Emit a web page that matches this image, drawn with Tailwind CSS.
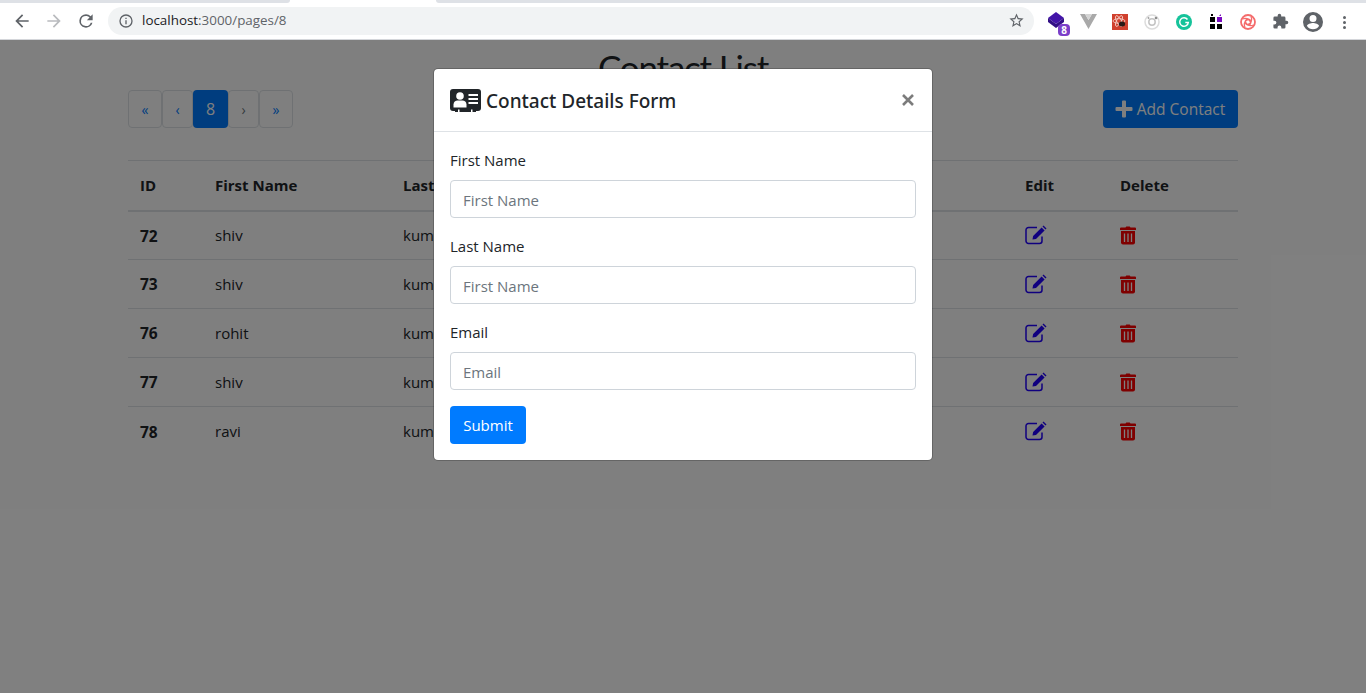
<!DOCTYPE html>
<html lang="en">
<head>
    <meta charset="UTF-8">
    <title>Contact List</title>
    <script src="https://cdn.jsdelivr.net/npm/@tailwindcss/browser@4"></script>
</head>
<body class="bg-white text-[#212529] font-['Open_Sans',sans-serif] overflow-hidden h-[693px]">

    <!-- Browser toolbar -->
    <div class="h-10 bg-white border-b border-[#d4d6da] relative flex items-center pt-[2px]">
        <div class="absolute top-0 left-0 w-[290px] h-[3px] bg-[#dee1e6] rounded-br-md"></div>
        <div class="absolute top-0 left-[436px] right-0 h-[3px] bg-[#dee1e6] rounded-bl-md"></div>

        <div class="w-[108px] flex items-center shrink-0">
            <svg class="ml-[12px]" width="20" height="20" viewBox="0 0 24 24" fill="#5f6368"><path d="M20 11H7.830l5.590-5.590L12 4l-8 8 8 8 1.410-1.410L7.830 13H20z"/></svg>
            <svg class="ml-[12px]" width="20" height="20" viewBox="0 0 24 24" fill="#b9bbbe"><path d="M4 13h12.170l-5.590 5.590L12 20l8-8-8-8-1.410 1.410L16.170 11H4z"/></svg>
            <svg class="ml-[12px]" width="20" height="20" viewBox="0 0 24 24" fill="#5f6368"><path d="M17.650 6.350A7.960 7.960 0 0 0 12 4a8 8 0 1 0 7.730 10h-2.080A6 6 0 1 1 12 6c1.660 0 3.140.69 4.220 1.780L13 11h7V4z"/></svg>
        </div>
        <div class="w-[926px] h-7 bg-[#f1f3f4] rounded-full flex items-center shrink-0">
            <svg class="ml-[10px]" width="16" height="16" viewBox="0 0 24 24" fill="#5f6368"><path d="M11 7h2v2h-2zm0 4h2v6h-2zm1-9a10 10 0 1 0 0 20 10 10 0 0 0 0-20zm0 18a8 8 0 1 1 0-16 8 8 0 0 1 0 16z"/></svg>
            <span class="ml-[8px] text-[13.400px] text-[#5f6368]"><span class="text-[#202124]">localhost</span>:3000/pages/8</span>
            <svg class="ml-auto mr-[9px]" width="17" height="17" viewBox="0 0 24 24" fill="#5f6368"><path d="M22 9.240l-7.190-.62L12 2 9.190 8.630 2 9.240l5.460 4.730L5.820 21 12 17.270 18.180 21l-1.630-7.030zM12 15.400l-3.760 2.270 1-4.280-3.320-2.880 4.380-.38L12 6.100l1.710 4.040 4.380.38-3.320 2.880 1 4.280z"/></svg>
        </div>

        <!-- Extensions -->
        <div class="relative flex-1 h-[38px] -mt-[2px]">
            <svg class="absolute left-[14px] top-[11px]" width="17" height="16" viewBox="0 0 17 16"><path d="M8 0l8 6-8 6-8-6z" fill="#4314a8"/><path d="M0 6l8 6 8-6v4l-8 6-8-6z" fill="#320f85"/></svg>
            <div class="absolute left-[24px] top-[23px] w-3 h-3 rounded-sm bg-[#7b3fc9] text-white text-[10px] leading-3 font-bold text-center">8</div>
            <svg class="absolute left-[46px] top-[13px]" width="17" height="15" viewBox="0 0 17 15"><path d="M0 0h5l3.500 6L12 0h5L8.500 15z" fill="#a9a9a9"/><path d="M5 0h7L8.500 6z" fill="#d4d4d4"/></svg>
            <svg class="absolute left-[78px] top-[13px]" width="16" height="16" viewBox="0 0 16 16"><rect width="16" height="16" fill="#d0402e"/><g fill="none" stroke="#f7d6cf" stroke-width=".8"><ellipse cx="7" cy="7" rx="6" ry="2.300"/><ellipse cx="7" cy="7" rx="6" ry="2.300" transform="rotate(60 7 7)"/><ellipse cx="7" cy="7" rx="6" ry="2.300" transform="rotate(120 7 7)"/></g><ellipse cx="10" cy="10" rx="3.200" ry="2.500" fill="#2b1a17"/></svg>
            <svg class="absolute left-[110px] top-[13px]" width="16" height="16" viewBox="0 0 16 16" fill="none"><circle cx="8" cy="8" r="7" stroke="#dcdcdc" stroke-width="1.500"/><circle cx="8" cy="8" r="3.200" stroke="#c4c4c4" stroke-width="1.500"/><circle cx="12" cy="4" r="1.300" fill="#8e8e8e"/><circle cx="4.500" cy="4" r=".9" fill="#9e9e9e"/></svg>
            <svg class="absolute left-[142px] top-[13px]" width="16" height="16" viewBox="0 0 16 16"><circle cx="8" cy="8" r="8" fill="#15c39a"/><path d="M11.500 5.500A4.300 4.300 0 1 0 12.300 8.500H9.300" fill="none" stroke="#fff" stroke-width="1.500"/></svg>
            <svg class="absolute left-[175px] top-[13px]" width="14" height="16" viewBox="0 0 14 16"><rect x="1" y="3" width="5" height="5" fill="#000"/><rect x="2" y="0" width="2" height="2" fill="#000"/><rect x="8" y="3" width="5" height="5" fill="#7a0bc0"/><path d="M10 2l2-2v2z" fill="#7a0bc0"/><rect x="1" y="10" width="5" height="5" fill="#000"/><rect x="8" y="10" width="5" height="5" fill="#000"/></svg>
            <svg class="absolute left-[206px] top-[13px]" width="16" height="16" viewBox="0 0 16 16" fill="none"><circle cx="8" cy="8" r="7" stroke="#f46b6b" stroke-width="1.800"/><circle cx="8" cy="8" r="2.800" stroke="#f46b6b" stroke-width="1.400"/><path d="M2.500 5C6 3.500 9 5 10.500 8M13.500 11C10 12.500 7 11 5.500 8M11 2.500C12.500 6 11 9 8 10.500M5 13.500C3.500 10 5 7 8 5.500" stroke="#f46b6b" stroke-width="1.200"/></svg>
            <svg class="absolute left-[238px] top-[12px]" width="17" height="17" viewBox="0 0 24 24" fill="#5f6368"><path d="M20.500 11H19V7a2 2 0 0 0-2-2h-4V3.500a2.500 2.500 0 0 0-5 0V5H4a2 2 0 0 0-2 2v3.800h1.500a2.700 2.700 0 0 1 0 5.400H2V20a2 2 0 0 0 2 2h3.800v-1.500a2.700 2.700 0 0 1 5.400 0V22H17a2 2 0 0 0 2-2v-4h1.500a2.500 2.500 0 0 0 0-5z"/></svg>
            <svg class="absolute left-[267px] top-[9px]" width="24" height="24" viewBox="0 0 24 24" fill="#5f6368"><path d="M12 2a10 10 0 1 0 0 20 10 10 0 0 0 0-20zm0 3a3.500 3.500 0 1 1 0 7 3.500 3.500 0 0 1 0-7zm0 14.200a7.200 7.200 0 0 1-6-3.220c.03-2 4-3.080 6-3.080s5.970 1.090 6 3.080a7.200 7.200 0 0 1-6 3.220z"/></svg>
            <div class="absolute left-[309px] top-[15px] flex flex-col gap-[2px]">
                <div class="w-[3px] h-[3px] rounded-full bg-[#5f6368]"></div>
                <div class="w-[3px] h-[3px] rounded-full bg-[#5f6368]"></div>
                <div class="w-[3px] h-[3px] rounded-full bg-[#5f6368]"></div>
            </div>
        </div>
    </div>

    <!-- Page -->
    <div class="relative h-[653px]">
        <div class="w-[1110px] mx-auto">
            <h1 class="text-[35px] leading-[48px] tracking-[-1.200px] text-center font-normal font-['Lato',sans-serif] pt-[3px] h-[50px]">Contact List</h1>

            <div class="flex justify-between mb-8">
                <nav class="flex">
                    <a class="w-[34px] h-[38px] flex items-center justify-center border border-[#dee2e6] rounded text-[#007bff] text-[14px]">«</a>
                    <a class="w-[31px] h-[38px] flex items-center justify-center border border-[#dee2e6] rounded text-[#007bff] text-[14px]">‹</a>
                    <a class="w-[35px] h-[38px] flex items-center justify-center rounded bg-[#007bff] text-white text-[16px]">8</a>
                    <a class="w-[31px] h-[38px] flex items-center justify-center border border-[#dee2e6] rounded text-[#6c757d] text-[14px]">›</a>
                    <a class="w-[34px] h-[38px] flex items-center justify-center border border-[#dee2e6] rounded text-[#007bff] text-[14px]">»</a>
                </nav>
                <button class="w-[135px] h-[38px] bg-[#007bff] rounded text-white text-[15.500px] flex items-center justify-center gap-[4px]">
                    <svg class="-ml-[1px]" width="18" height="18" viewBox="0 0 18 18" fill="#fff"><path d="M7 1.500a1 1 0 0 1 1-1h2a1 1 0 0 1 1 1V7h5.500a1 1 0 0 1 1 1v2a1 1 0 0 1-1 1H11v5.500a1 1 0 0 1-1 1H8a1 1 0 0 1-1-1V11H1.500a1 1 0 0 1-1-1V8a1 1 0 0 1 1-1H7z"/></svg>
                    <span class="pt-[2px]">Add Contact</span>
                </button>
            </div>

            <table class="w-full table-fixed text-[15px] border-t border-[#dee2e6]">
                <colgroup>
                    <col class="w-[75px]"><col class="w-[188px]"><col class="w-[190px]"><col class="w-[432px]"><col class="w-[95px]"><col class="w-[130px]">
                </colgroup>
                <thead>
                    <tr class="h-[50px] border-b-2 border-[#dee2e6] text-left">
                        <th class="px-3 font-bold">ID</th><th class="px-3 font-bold">First Name</th><th class="px-3 font-bold">Last Name</th><th class="px-3 font-bold">Email</th><th class="px-3 font-bold">Edit</th><th class="px-3 font-bold">Delete</th>
                    </tr>
                </thead>
                <tbody>
                    <tr class="h-[49px] border-b border-[#dee2e6]">
                        <td class="px-3 pt-[2px] font-bold text-[15.500px]">72</td><td class="px-3">shiv</td><td class="px-3">kumar</td><td class="px-3"></td>
                        <td class="px-3"><svg width="22" height="20" viewBox="0 0 22 20" fill="none"><path d="M17 11.500V16a2.500 2.500 0 0 1-2.500 2.500H3.500A2.500 2.500 0 0 1 1 16V5a2.500 2.500 0 0 1 2.500-2.500H12" stroke="#2000ff" stroke-width="1.500"/><path d="M7.500 14.500l.6-3.500 8.500-8.500 3 3L11 14z" fill="#2000ff"/><path d="M17.500 1.500l1-1 3 3-1 1z" fill="#2000ff"/></svg></td>
                        <td class="px-3"><svg width="16" height="19" viewBox="0 0 16 19"><path d="M5.500 1.500L6.300.5h3.400l.8 1H15a1 1 0 0 1 1 1V4H0V2.500a1 1 0 0 1 1-1z" fill="#ff0000"/><path d="M1 5h14v11.500a2 2 0 0 1-2 2H3a2 2 0 0 1-2-2z" fill="#ff0000"/><path d="M4.500 7.500v8.500M8 7.500v8.500M11.500 7.500v8.500" stroke="#fff" stroke-width="1.300"/></svg></td>
                    </tr>
                    <tr class="h-[49px] border-b border-[#dee2e6]">
                        <td class="px-3 pt-[2px] font-bold text-[15.500px]">73</td><td class="px-3">shiv</td><td class="px-3">kumar</td><td class="px-3"></td>
                        <td class="px-3"><svg width="22" height="20" viewBox="0 0 22 20" fill="none"><path d="M17 11.500V16a2.500 2.500 0 0 1-2.500 2.500H3.500A2.500 2.500 0 0 1 1 16V5a2.500 2.500 0 0 1 2.500-2.500H12" stroke="#2000ff" stroke-width="1.500"/><path d="M7.500 14.500l.6-3.500 8.500-8.500 3 3L11 14z" fill="#2000ff"/><path d="M17.500 1.500l1-1 3 3-1 1z" fill="#2000ff"/></svg></td>
                        <td class="px-3"><svg width="16" height="19" viewBox="0 0 16 19"><path d="M5.500 1.500L6.300.5h3.400l.8 1H15a1 1 0 0 1 1 1V4H0V2.500a1 1 0 0 1 1-1z" fill="#ff0000"/><path d="M1 5h14v11.500a2 2 0 0 1-2 2H3a2 2 0 0 1-2-2z" fill="#ff0000"/><path d="M4.500 7.500v8.500M8 7.500v8.500M11.500 7.500v8.500" stroke="#fff" stroke-width="1.300"/></svg></td>
                    </tr>
                    <tr class="h-[49px] border-b border-[#dee2e6]">
                        <td class="px-3 pt-[2px] font-bold text-[15.500px]">76</td><td class="px-3">rohit</td><td class="px-3">kumar</td><td class="px-3"></td>
                        <td class="px-3"><svg width="22" height="20" viewBox="0 0 22 20" fill="none"><path d="M17 11.500V16a2.500 2.500 0 0 1-2.500 2.500H3.500A2.500 2.500 0 0 1 1 16V5a2.500 2.500 0 0 1 2.500-2.500H12" stroke="#2000ff" stroke-width="1.500"/><path d="M7.500 14.500l.6-3.500 8.500-8.500 3 3L11 14z" fill="#2000ff"/><path d="M17.500 1.500l1-1 3 3-1 1z" fill="#2000ff"/></svg></td>
                        <td class="px-3"><svg width="16" height="19" viewBox="0 0 16 19"><path d="M5.500 1.500L6.300.5h3.400l.8 1H15a1 1 0 0 1 1 1V4H0V2.500a1 1 0 0 1 1-1z" fill="#ff0000"/><path d="M1 5h14v11.500a2 2 0 0 1-2 2H3a2 2 0 0 1-2-2z" fill="#ff0000"/><path d="M4.500 7.500v8.500M8 7.500v8.500M11.500 7.500v8.500" stroke="#fff" stroke-width="1.300"/></svg></td>
                    </tr>
                    <tr class="h-[49px] border-b border-[#dee2e6]">
                        <td class="px-3 pt-[2px] font-bold text-[15.500px]">77</td><td class="px-3">shiv</td><td class="px-3">kumar</td><td class="px-3"></td>
                        <td class="px-3"><svg width="22" height="20" viewBox="0 0 22 20" fill="none"><path d="M17 11.500V16a2.500 2.500 0 0 1-2.500 2.500H3.500A2.500 2.500 0 0 1 1 16V5a2.500 2.500 0 0 1 2.500-2.500H12" stroke="#2000ff" stroke-width="1.500"/><path d="M7.500 14.500l.6-3.500 8.500-8.500 3 3L11 14z" fill="#2000ff"/><path d="M17.500 1.500l1-1 3 3-1 1z" fill="#2000ff"/></svg></td>
                        <td class="px-3"><svg width="16" height="19" viewBox="0 0 16 19"><path d="M5.500 1.500L6.300.5h3.400l.8 1H15a1 1 0 0 1 1 1V4H0V2.500a1 1 0 0 1 1-1z" fill="#ff0000"/><path d="M1 5h14v11.500a2 2 0 0 1-2 2H3a2 2 0 0 1-2-2z" fill="#ff0000"/><path d="M4.500 7.500v8.500M8 7.500v8.500M11.500 7.500v8.500" stroke="#fff" stroke-width="1.300"/></svg></td>
                    </tr>
                    <tr class="h-[49px]">
                        <td class="px-3 pt-[2px] font-bold text-[15.500px]">78</td><td class="px-3">ravi</td><td class="px-3">kumar</td><td class="px-3"></td>
                        <td class="px-3"><svg width="22" height="20" viewBox="0 0 22 20" fill="none"><path d="M17 11.500V16a2.500 2.500 0 0 1-2.500 2.500H3.500A2.500 2.500 0 0 1 1 16V5a2.500 2.500 0 0 1 2.500-2.500H12" stroke="#2000ff" stroke-width="1.500"/><path d="M7.500 14.500l.6-3.500 8.500-8.500 3 3L11 14z" fill="#2000ff"/><path d="M17.500 1.500l1-1 3 3-1 1z" fill="#2000ff"/></svg></td>
                        <td class="px-3"><svg width="16" height="19" viewBox="0 0 16 19"><path d="M5.500 1.500L6.300.5h3.400l.8 1H15a1 1 0 0 1 1 1V4H0V2.500a1 1 0 0 1 1-1z" fill="#ff0000"/><path d="M1 5h14v11.500a2 2 0 0 1-2 2H3a2 2 0 0 1-2-2z" fill="#ff0000"/><path d="M4.500 7.500v8.500M8 7.500v8.500M11.500 7.500v8.500" stroke="#fff" stroke-width="1.300"/></svg></td>
                    </tr>
                </tbody>
            </table>
        </div>

        <!-- Modal backdrop -->
        <div class="absolute inset-0 bg-black/50 flex justify-center items-start pt-[28px]">
            <div class="w-[500px] bg-white bg-clip-padding border border-black/20 rounded-[5px]">
                <div class="h-[63px] border-b border-[#dee2e6] flex items-center pl-4 pr-[17px]">
                    <svg width="31" height="23" viewBox="0 0 31 23"><rect width="31" height="22" rx="3" fill="#212529"/><rect x="5" y="21" width="21" height="2" fill="#212529"/><circle cx="10" cy="7" r="3.800" fill="#fff"/><path d="M3.500 18.500v-3c0-2.500 2-4 4-4h5c2 0 4 1.500 4 4v3z" fill="#fff"/><path d="M18.500 5h9.500v2h-9.500zM18.500 9h9.500v2h-9.500zM18.500 13h9.500v2h-9.500z" fill="#fff"/><path d="M8 23v-2.500h1.500V23zM21 23v-2.500h1.500V23z" fill="#fff"/></svg>
                    <h5 class="ml-[5px] pt-[2px] text-[19px] font-medium font-['Noto_Sans',sans-serif]">Contact Details Form</h5>
                    <svg class="ml-auto mr-[1px]" width="12" height="12" viewBox="0 0 12 12" stroke="#7c7c7c" stroke-width="2.600"><path d="M1 1l10 10M11 1L1 11"/></svg>
                </div>
                <form class="px-4 pt-4 pb-4">
                    <label class="block text-[15px] leading-6 h-[32px]">First Name</label>
                    <div class="h-[38px] border border-[#ced4da] rounded flex items-center px-3 pt-[2px] text-[15px] text-[#6c757d]">First Name</div>
                    <label class="block text-[15px] leading-6 h-[32px] mt-4">Last Name</label>
                    <div class="h-[38px] border border-[#ced4da] rounded flex items-center px-3 pt-[2px] text-[15px] text-[#6c757d]">First Name</div>
                    <label class="block text-[15px] leading-6 h-[32px] mt-4">Email</label>
                    <div class="h-[38px] border border-[#ced4da] rounded flex items-center px-3 pt-[2px] text-[15px] text-[#6c757d]">Email</div>
                    <button type="button" class="mt-4 w-[76px] h-[38px] bg-[#007bff] text-white text-[15px] rounded">Submit</button>
                </form>
            </div>
        </div>
    </div>

</body>
</html>
